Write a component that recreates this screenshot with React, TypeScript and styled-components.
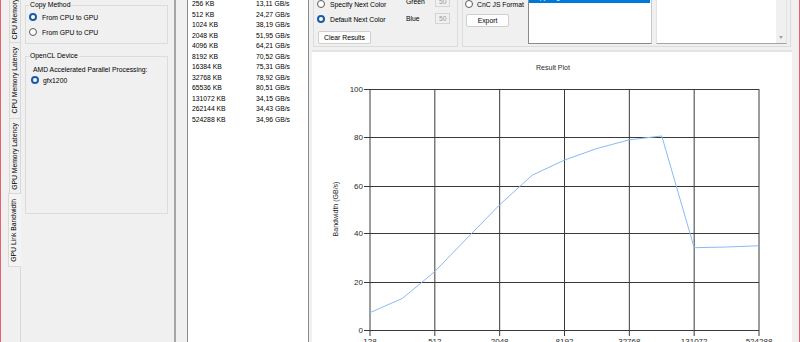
import React from "react";
import styled, { createGlobalStyle } from "styled-components";

const GlobalStyle = createGlobalStyle`
  html, body { margin: 0; padding: 0; background: #f0f0f0; overflow: hidden; }
  body { font-family: "Liberation Sans", Arial, sans-serif; font-size: 6.8px; color: #000; }
  * { box-sizing: border-box; }
`;

const Window = styled.div`
  display: flex;
  width: 800px;
  height: 342px;
  overflow: hidden;
  border-left: 1px solid #e5636f;
  border-right: 1px solid #e5636f;
  background: #f0f0f0;
`;

const TabStrip = styled.div`
  width: 19px;
  flex: none;
  display: flex;
  flex-direction: column;
  align-items: flex-end;
`;

const Tab = styled.div<{ $h: number; $selected?: boolean; $first?: boolean }>`
  flex: none;
  position: relative;
  z-index: ${(p) => (p.$selected ? 1 : 0)};
  height: ${(p) => p.$h}px;
  width: ${(p) => (p.$selected ? 13 : 11)}px;
  margin-top: ${(p) => (p.$first ? -39 : -1)}px;
  margin-right: ${(p) => (p.$selected ? -1 : 0)}px;
  padding-right: ${(p) => (p.$selected ? 2 : 0)}px;
  border: 1px solid #d9d9d9;
  border-right: none;
  background: ${(p) => (p.$selected ? "#f4f4f4" : "#f0f0f0")};
  display: flex;
  align-items: center;
  justify-content: center;
`;

const TabLabel = styled.span`
  writing-mode: vertical-rl;
  transform: rotate(180deg);
  white-space: nowrap;
  line-height: 8px;
`;

const TabPage = styled.div`
  flex: 1;
  min-width: 0;
  display: flex;
  border-left: 1px solid #d9d9d9;
`;

const LeftPanel = styled.div`
  width: 155px;
  flex: none;
  display: flex;
  flex-direction: column;
  padding-left: 4px;
  border-right: 2px solid #a6a6a6;
`;

const GroupBox = styled.fieldset<{ $mt: number; $h?: number; $pt?: number; $pb?: number }>`
  margin: ${(p) => p.$mt}px 0 0 0;
  padding: ${(p) => p.$pt ?? 0}px 0 ${(p) => p.$pb ?? 0}px 0;
  width: 143px;
  min-width: 0;
  height: ${(p) => (p.$h ? `${p.$h}px` : "auto")};
  border: 1px solid #dcdcdc;
`;

const Legend = styled.legend`
  margin-left: 3px;
  padding: 0 1px;
  line-height: 8px;
  font-size: 6.8px;
`;

const OptionRow = styled.div<{ $h?: number; $indent?: number; $gap?: number }>`
  display: flex;
  align-items: center;
  height: ${(p) => p.$h ?? 15}px;
  padding-left: ${(p) => p.$indent ?? 3}px;
  gap: ${(p) => p.$gap ?? 5}px;
  white-space: nowrap;
`;

const RadioDot = styled.span<{ $checked?: boolean }>`
  flex: none;
  width: 8px;
  height: 8px;
  border-radius: 50%;
  background: #fff;
  border: ${(p) => (p.$checked ? "2.5px solid #1b5aa6" : "1px solid #5a5a5a")};
`;

const PlainLabel = styled.div<{ $indent: number }>`
  height: 11px;
  line-height: 11px;
  padding-left: ${(p) => p.$indent}px;
  white-space: nowrap;
`;

const ResultsList = styled.div`
  width: 122px;
  flex: none;
  margin-left: 11px;
  background: #fff;
  border-left: 1px solid #8c8c8c;
  border-right: 1px solid #8c8c8c;
  overflow: hidden;
`;

const ResultsBody = styled.div`
  margin-top: -11.5px;
  padding-left: 4px;
`;

const ResultRow = styled.div`
  display: grid;
  grid-template-columns: 64px auto;
  height: 10.5px;
  line-height: 10.5px;
  white-space: nowrap;
`;

const RightPanel = styled.div`
  width: 480px;
  flex: none;
  margin-left: 3px;
  display: flex;
  flex-direction: column;
`;

const TopRow = styled.div`
  height: 50px;
  flex: none;
  display: flex;
  align-items: flex-end;
`;

const TopGroup = styled.fieldset<{ $w: number; $ml: number }>`
  margin: 0 0 3px ${(p) => p.$ml}px;
  padding: 10px 0 2px 0;
  width: ${(p) => p.$w}px;
  min-width: 0;
  border: 1px solid #dcdcdc;
  display: flex;
  align-items: flex-end;
`;

const GroupInner = styled.div<{ $pl: number }>`
  display: flex;
  align-items: flex-end;
  padding-left: ${(p) => p.$pl}px;
  width: 100%;
`;

const Column = styled.div<{ $w?: number; $mb?: number }>`
  display: flex;
  flex-direction: column;
  flex: none;
  width: ${(p) => (p.$w ? `${p.$w}px` : "auto")};
  margin-bottom: ${(p) => p.$mb ?? 0}px;
`;

const Button = styled.button<{ $w: number; $mt: number }>`
  width: ${(p) => p.$w}px;
  height: 13px;
  margin: ${(p) => p.$mt}px 0 0 1px;
  padding: 0;
  font-family: inherit;
  font-size: 6.8px;
  line-height: 11px;
  color: #000;
  background: #fdfdfd;
  border: 1px solid #cfcfcf;
  border-radius: 2px;
`;

const ColorRow = styled.div`
  display: flex;
  align-items: center;
  height: 17px;
`;

const ColorLabel = styled.span`
  width: 29px;
  white-space: nowrap;
`;

const NumBox = styled.div`
  width: 15px;
  height: 11px;
  border: 1px solid #d4d4d4;
  background: #f0f0f0;
  color: #9a9a9a;
  padding-left: 3px;
  line-height: 9px;
`;

const ListBox = styled.div`
  width: 124px;
  height: 53px;
  flex: none;
  background: #fff;
  border: 1px solid #8a8a8a;
  border-top-color: #b5b5b5;
  border-right-color: #c8c8c8;
  overflow: hidden;
`;

const ListItem = styled.div<{ $selected?: boolean }>`
  height: 10.5px;
  line-height: 10.5px;
  padding-left: 2px;
  margin-right: 1px;
  white-space: nowrap;
  background: ${(p) => (p.$selected ? "#0078d7" : "transparent")};
  color: ${(p) => (p.$selected ? "#fff" : "#000")};
`;

const TextArea = styled.div`
  width: 131px;
  height: 60px;
  flex: none;
  margin: 0 0 0.5px 4px;
  display: flex;
  background: #fff;
  border: 1px solid #e3e3e3;
  border-bottom-color: #a5a5a5;
`;

const TextAreaBody = styled.div`
  flex: 1;
`;

const ScrollBar = styled.div`
  width: 10px;
  flex: none;
  background: #f0f0f0;
  display: flex;
  flex-direction: column;
  justify-content: flex-end;
  align-items: center;
`;

const ScrollArrow = styled.div`
  height: 11px;
  display: flex;
  align-items: center;
  justify-content: center;
`;

const ArrowGlyph = styled.span`
  width: 0;
  height: 0;
  border-left: 2.5px solid transparent;
  border-right: 2.5px solid transparent;
  border-top: 3px solid #a3a3a3;
`;

const ChartBox = styled.div`
  flex: 1;
  background: #fff;
  border-top: 2px solid #e4e4e4;
  overflow: hidden;
`;

const ChartText = styled.text<{ $size: number }>`
  font-family: "Liberation Sans", Arial, sans-serif;
  font-size: ${(p) => p.$size}px;
  fill: #2a2a2a;
`;

const results: [string, string][] = [
  ["128 KB", "7,21 GB/s"],
  ["256 KB", "13,11 GB/s"],
  ["512 KB", "24,27 GB/s"],
  ["1024 KB", "38,19 GB/s"],
  ["2048 KB", "51,95 GB/s"],
  ["4096 KB", "64,21 GB/s"],
  ["8192 KB", "70,52 GB/s"],
  ["16384 KB", "75,31 GB/s"],
  ["32768 KB", "78,92 GB/s"],
  ["65536 KB", "80,51 GB/s"],
  ["131072 KB", "34,15 GB/s"],
  ["262144 KB", "34,43 GB/s"],
  ["524288 KB", "34,96 GB/s"],
];

const values = [7.21, 13.11, 24.27, 38.19, 51.95, 64.21, 70.52, 75.31, 78.92, 80.51, 34.15, 34.43, 34.96];

const X0 = 58;
const X1 = 447;
const Y0 = 37;
const Y1 = 278;
const xTicks = ["128", "512", "2048", "8192", "32768", "131072", "524288"];
const yTicks = ["100", "80", "60", "40", "20", "0"];
const hLines = [37, 85, 134, 181, 230, 278];

const Chart: React.FC = () => {
  const xs = xTicks.map((_, i) => X0 + (i * (X1 - X0)) / 6);
  const pts = values
    .map((v, i) => {
      const x = X0 + (i * (X1 - X0)) / 12;
      const y = Y1 - (v * (Y1 - Y0)) / 100;
      return `${x.toFixed(2)},${y.toFixed(2)}`;
    })
    .join(" ");
  return (
    <svg width={480} height={290} viewBox="0 0 480 290">
      <ChartText $size={7} x={241} y={17.5} textAnchor="middle">
        Result Plot
      </ChartText>
      {hLines.map((y, j) => (
        <g key={`h${j}`}>
          <line x1={X0} x2={X1} y1={y + 0.5} y2={y + 0.5} stroke="#3a3a3a" strokeWidth={1} />
          <line x1={52} x2={X0} y1={y + 0.5} y2={y + 0.5} stroke="#3a3a3a" strokeWidth={1} />
          <ChartText $size={8} x={51} y={y + 3.3} textAnchor="end">
            {yTicks[j]}
          </ChartText>
        </g>
      ))}
      {xs.map((x, i) => (
        <g key={`v${i}`}>
          <line x1={x} x2={x} y1={Y0} y2={Y1 + 6} stroke="#3a3a3a" strokeWidth={1} />
          <ChartText $size={8} x={x} y={292} textAnchor="middle">
            {xTicks[i]}
          </ChartText>
        </g>
      ))}
      <ChartText $size={7} x={0} y={0} textAnchor="middle" transform="translate(26 157) rotate(-90)">
        Bandwidth (GB/s)
      </ChartText>
      <polyline points={pts} fill="none" stroke="#8cb9f7" strokeWidth={1} />
    </svg>
  );
};

export default function App() {
  return (
    <>
      <GlobalStyle />
      <Window>
        <TabStrip>
          <Tab $h={82} $first>
            <TabLabel>CPU Memory Bandwidth</TabLabel>
          </Tab>
          <Tab $h={77}>
            <TabLabel>CPU Memory Latency</TabLabel>
          </Tab>
          <Tab $h={76}>
            <TabLabel>GPU Memory Latency</TabLabel>
          </Tab>
          <Tab $h={74} $selected>
            <TabLabel>GPU Link Bandwidth</TabLabel>
          </Tab>
        </TabStrip>
        <TabPage>
          <LeftPanel>
            <GroupBox $mt={1} $pt={0.5} $pb={3}>
              <Legend>Copy Method</Legend>
              <OptionRow>
                <RadioDot $checked />
                From CPU to GPU
              </OptionRow>
              <OptionRow>
                <RadioDot />
                From GPU to CPU
              </OptionRow>
            </GroupBox>
            <GroupBox $mt={8.5} $h={161.5} $pt={3.5}>
              <Legend>OpenCL Device</Legend>
              <PlainLabel $indent={7}>AMD Accelerated Parallel Processing:</PlainLabel>
              <OptionRow $h={11} $indent={5} $gap={4}>
                <RadioDot $checked />
                gfx1200
              </OptionRow>
            </GroupBox>
          </LeftPanel>
          <ResultsList>
            <ResultsBody>
              {results.map(([size, bw]) => (
                <ResultRow key={size}>
                  <span>{size}</span>
                  <span>{bw}</span>
                </ResultRow>
              ))}
            </ResultsBody>
          </ResultsList>
          <RightPanel>
            <TopRow>
              <TopGroup $w={145} $ml={1}>
                <GroupInner $pl={3}>
                  <Column $w={89}>
                    <OptionRow $indent={0}>
                      <RadioDot />
                      Specify Next Color
                    </OptionRow>
                    <OptionRow $indent={0}>
                      <RadioDot $checked />
                      Default Next Color
                    </OptionRow>
                    <Button $w={53} $mt={4.5}>
                      Clear Results
                    </Button>
                  </Column>
                  <Column $mb={17}>
                    <ColorRow>
                      <ColorLabel>Red</ColorLabel>
                      <NumBox>50</NumBox>
                    </ColorRow>
                    <ColorRow>
                      <ColorLabel>Green</ColorLabel>
                      <NumBox>50</NumBox>
                    </ColorRow>
                    <ColorRow>
                      <ColorLabel>Blue</ColorLabel>
                      <NumBox>50</NumBox>
                    </ColorRow>
                  </Column>
                </GroupInner>
              </TopGroup>
              <TopGroup $w={329} $ml={4}>
                <GroupInner $pl={2}>
                  <Column $w={63} $mb={17.5}>
                    <OptionRow $indent={0} $gap={4}>
                      <RadioDot />
                      CnC JS Format
                    </OptionRow>
                    <Button $w={43} $mt={2}>
                      Export
                    </Button>
                  </Column>
                  <ListBox>
                    <ListItem $selected>Copy to gfx1200</ListItem>
                  </ListBox>
                  <TextArea>
                    <TextAreaBody />
                    <ScrollBar>
                      <ScrollArrow>
                        <ArrowGlyph />
                      </ScrollArrow>
                    </ScrollBar>
                  </TextArea>
                </GroupInner>
              </TopGroup>
            </TopRow>
            <ChartBox>
              <Chart />
            </ChartBox>
          </RightPanel>
        </TabPage>
      </Window>
    </>
  );
}
